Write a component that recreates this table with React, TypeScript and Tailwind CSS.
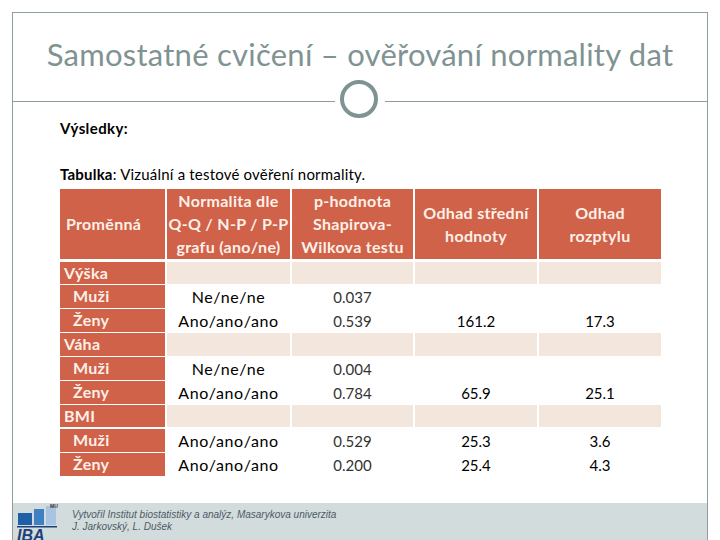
import React from "react";

const cols = "grid grid-cols-[105px_123px_121px_122px_122px] gap-x-[2px]";

type Row = {
  label: string;
  sub?: boolean;
  a?: string;
  b?: string;
  c?: string;
  d?: string;
};

const rows: Row[] = [
  { label: "Výška" },
  { label: "Muži", sub: true, a: "Ne/ne/ne", b: "0.037" },
  { label: "Ženy", sub: true, a: "Ano/ano/ano", b: "0.539", c: "161.2", d: "17.3" },
  { label: "Váha" },
  { label: "Muži", sub: true, a: "Ne/ne/ne", b: "0.004" },
  { label: "Ženy", sub: true, a: "Ano/ano/ano", b: "0.784", c: "65.9", d: "25.1" },
  { label: "BMI" },
  { label: "Muži", sub: true, a: "Ano/ano/ano", b: "0.529", c: "25.3", d: "3.6" },
  { label: "Ženy", sub: true, a: "Ano/ano/ano", b: "0.200", c: "25.4", d: "4.3" },
];

function Logo() {
  return (
    <svg width="48" height="37" viewBox="0 0 48 37">
      <rect x="4" y="10" width="14" height="12" fill="#1f5fa8" />
      <rect x="20" y="6" width="10" height="16" fill="#3f7fc4" />
      <rect x="32" y="3" width="10" height="19" fill="#a9c3e3" />
      <rect x="3" y="23" width="40" height="1.5" fill="#1f3f78" />
      <text x="36" y="5" fontSize="5" fontFamily="Liberation Sans, sans-serif" fontWeight="bold" fill="#333">
        MU
      </text>
      <text x="3" y="38" fontSize="16" fontStyle="italic" fontWeight="bold" fontFamily="Liberation Sans, sans-serif" fill="#1f3f78">
        IBA
      </text>
    </svg>
  );
}

export default function App() {
  return (
    <div className="w-[720px] h-[540px] bg-white overflow-hidden pt-[12px] pl-[12px] font-['Lato',sans-serif]">
      <div className="w-[696px] h-[528px] border-l border-r border-t border-[#8e9d9d] flex flex-col">
        <div className="h-[87px] flex items-center justify-center">
          <h1 className="text-[31px] text-[#7f9393] tracking-[0.25px] mt-[-4px] whitespace-nowrap">
            Samostatné cvičení – ověřování normality dat
          </h1>
        </div>
        <div className="flex items-center h-[2px]">
          <div className="flex-1 h-px bg-[#8e9d9d]" />
          <div className="w-[38px] h-[38px] rounded-full border-[4px] border-[#7f9393] mx-[5px] bg-white mt-[-5px]" />
          <div className="flex-1 h-px bg-[#8e9d9d] ml-[2px]" />
        </div>
        <div className="flex-1 pl-[47px] pt-[16px] text-black">
          <p className="font-bold text-[15px] tracking-[0.4px] leading-[20px]">Výsledky:</p>
          <p className="mt-[25px] text-[15px] tracking-[0.2px]">
            <span className="font-bold">Tabulka</span>: Vizuální a testové ověření normality.
          </p>
          <div className="mt-[3px] text-[15px]">
            <div className={`${cols} h-[70px] text-[#fdf0e8] font-bold leading-[23px] text-[16px] tracking-[0.3px]`}>
              <div className="bg-[#cf6249] flex items-center pl-[6px]">Proměnná</div>
              <div className="bg-[#cf6249] flex items-center justify-center text-center">
                Normalita dle<br />Q-Q / N-P / P-P<br />grafu (ano/ne)
              </div>
              <div className="bg-[#cf6249] flex items-center justify-center text-center">
                p-hodnota<br />Shapirova-<br />Wilkova testu
              </div>
              <div className="bg-[#cf6249] flex items-center justify-center text-center">
                Odhad střední<br />hodnoty
              </div>
              <div className="bg-[#cf6249] flex items-center justify-center text-center">
                Odhad<br />rozptylu
              </div>
            </div>
            <div className="mt-[3px] flex flex-col gap-y-[1.5px]">
              {rows.map((r, i) => (
                <div key={i} className={`${cols} h-[22.4px] leading-[22px]`}>
                  <div className={`bg-[#cf6249] text-[#fdf0e8] font-bold text-[16px] tracking-[0.3px] ${r.sub ? "pl-[13px]" : "pl-[4px]"}`}>
                    {r.label}
                  </div>
                  {r.sub ? (
                    <>
                      <div className="text-center pt-[1px] text-[16px] tracking-[0.6px]">{r.a}</div>
                      <div className="text-center text-[#333] pt-[1px]">{r.b}</div>
                      <div className="text-center pt-[1px]">{r.c}</div>
                      <div className="text-center pt-[1px]">{r.d}</div>
                    </>
                  ) : (
                    <>
                      <div className="bg-[#f3e6dc]" />
                      <div className="bg-[#f3e6dc]" />
                      <div className="bg-[#f3e6dc]" />
                      <div className="bg-[#f3e6dc]" />
                    </>
                  )}
                </div>
              ))}
            </div>
          </div>
        </div>
        <div className="h-[37px] bg-[#d3dcdc] flex items-start">
          <div className="pl-[1px]">
            <Logo />
          </div>
          <div className="pl-[10px] pt-[6px] text-[10px] leading-[12px] italic text-[#4d5a66] font-['Liberation_Sans',sans-serif]">
            <div>Vytvořil Institut biostatistiky a analýz, Masarykova univerzita</div>
            <div>J. Jarkovský, L. Dušek</div>
          </div>
        </div>
      </div>
    </div>
  );
}
